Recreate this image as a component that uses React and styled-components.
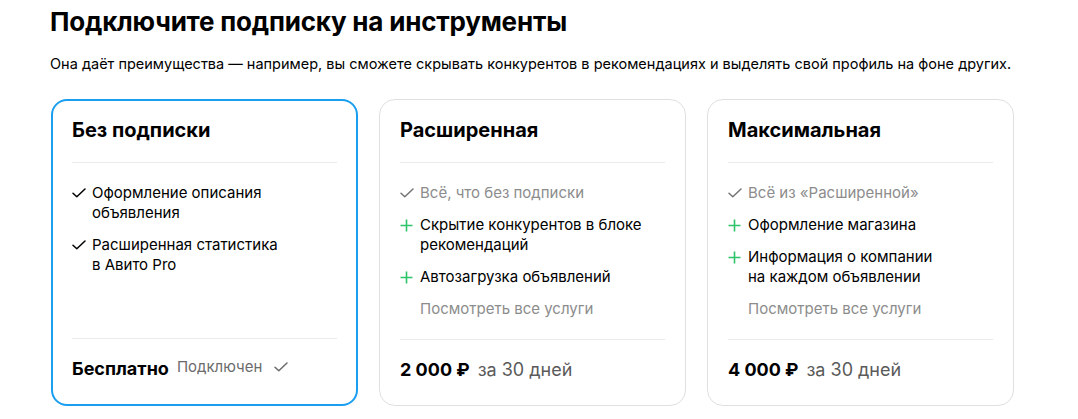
import React from 'react';
import styled, { createGlobalStyle } from 'styled-components';

const GlobalStyle = createGlobalStyle`
  body {
    margin: 0;
    background: #ffffff;
    font-family: Inter, "Noto Sans", Roboto, sans-serif;
    color: #000000;
  }
`;

const Page = styled.div`
  padding: 4px 50px 0 50px;
`;

const Title = styled.h1`
  margin: 0;
  font-size: 26px;
  line-height: 36px;
  font-weight: 700;
  letter-spacing: -0.2px;
`;

const Subtitle = styled.p`
  margin: 14px 0 0 0;
  font-size: 14.5px;
  line-height: 20px;
`;

const Cards = styled.div`
  display: flex;
  gap: 21px;
  margin: 25px 0 0 1px;
`;

const Card = styled.div`
  box-sizing: border-box;
  width: 307px;
  height: 307px;
  border-radius: 16px;
  border: ${p => (p.$active ? '2px solid #1a9ef0' : '1px solid #e0e0e0')};
  padding: ${p => (p.$active ? '15px 19px 0' : '16px 20px 0')};
  display: flex;
  flex-direction: column;
`;

const CardTitle = styled.h2`
  margin: 0;
  font-size: 20px;
  line-height: 28px;
  font-weight: 700;
  padding-bottom: 18px;
  border-bottom: 1px solid #ebebeb;
`;

const List = styled.ul`
  list-style: none;
  margin: 0;
  padding: 20px 0 0 0;
  flex: 1;
  display: flex;
  flex-direction: column;
  gap: 12px;
  border-bottom: 1px solid #ebebeb;
`;

const Item = styled.li`
  display: flex;
  align-items: flex-start;
  gap: 4px;
  font-size: 15px;
  line-height: 20px;
  color: ${p => (p.$muted ? '#8c8c8c' : '#000000')};
`;

const IconSlot = styled.span`
  flex: none;
  width: 16px;
  height: 20px;
  display: flex;
  align-items: center;
  justify-content: flex-start;
`;

const MoreLink = styled.li`
  padding-left: 20px;
  font-size: 15px;
  line-height: 20px;
  color: #8c8c8c;
`;

const PriceRow = styled.div`
  display: flex;
  align-items: baseline;
  height: 65px;
  padding-top: 18px;
  box-sizing: border-box;
  gap: 8px;
`;

const Price = styled.span`
  font-size: 18px;
  line-height: 24px;
  font-weight: 700;
`;

const Period = styled.span`
  font-size: 18px;
  line-height: 24px;
  color: #5a5a5a;
`;

const Status = styled.span`
  display: flex;
  align-items: center;
  gap: 12px;
  font-size: 15px;
  line-height: 20px;
  color: #6b6b6b;
  position: relative;
  top: -3px;
`;

const Check = ({ color = '#000' }) => (
  <svg width="14" height="10" viewBox="0 0 14 10" fill="none">
    <path d="M1 5.2 L4.8 8.8 L13 1" stroke={color} strokeWidth="1.5" strokeLinecap="round" strokeLinejoin="round" />
  </svg>
);

const Plus = () => (
  <svg width="13" height="13" viewBox="0 0 13 13" fill="none">
    <path d="M6.5 0.5 V12.5 M0.5 6.5 H12.5" stroke="#2dc46a" strokeWidth="1.6" />
  </svg>
);

const plans = [
  {
    title: 'Без подписки',
    active: true,
    items: [
      { icon: 'check', text: ['Оформление описания', 'объявления'] },
      { icon: 'check', text: ['Расширенная статистика', 'в Авито Pro'] },
    ],
  },
  {
    title: 'Расширенная',
    price: '2 000 ₽',
    items: [
      { icon: 'muted', text: ['Всё, что без подписки'] },
      { icon: 'plus', text: ['Скрытие конкурентов в блоке', 'рекомендаций'] },
      { icon: 'plus', text: ['Автозагрузка объявлений'] },
    ],
    more: true,
  },
  {
    title: 'Максимальная',
    price: '4 000 ₽',
    items: [
      { icon: 'muted', text: ['Всё из «Расширенной»'] },
      { icon: 'plus', text: ['Оформление магазина'] },
      { icon: 'plus', text: ['Информация о компании', 'на каждом объявлении'] },
    ],
    more: true,
  },
];

function ItemIcon({ kind }) {
  if (kind === 'plus') return <Plus />;
  if (kind === 'muted') return <Check color="#757575" />;
  return <Check />;
}

export default function App() {
  return (
    <>
      <GlobalStyle />
      <Page>
        <Title>Подключите подписку на инструменты</Title>
        <Subtitle>
          Она даёт преимущества — например, вы сможете скрывать конкурентов в рекомендациях и выделять свой профиль на фоне других.
        </Subtitle>
        <Cards>
          {plans.map(plan => (
            <Card key={plan.title} $active={plan.active}>
              <CardTitle>{plan.title}</CardTitle>
              <List>
                {plan.items.map((it, i) => (
                  <Item key={i} $muted={it.icon === 'muted'}>
                    <IconSlot>
                      <ItemIcon kind={it.icon} />
                    </IconSlot>
                    <span>
                      {it.text.map((line, j) => (
                        <React.Fragment key={j}>
                          {j > 0 && <br />}
                          {line}
                        </React.Fragment>
                      ))}
                    </span>
                  </Item>
                ))}
                {plan.more && <MoreLink>Посмотреть все услуги</MoreLink>}
              </List>
              <PriceRow>
                {plan.price ? (
                  <>
                    <Price>{plan.price}</Price>
                    <Period>за 30 дней</Period>
                  </>
                ) : (
                  <>
                    <Price>Бесплатно</Price>
                    <Status>
                      Подключен <Check color="#6b6b6b" />
                    </Status>
                  </>
                )}
              </PriceRow>
            </Card>
          ))}
        </Cards>
      </Page>
    </>
  );
}
